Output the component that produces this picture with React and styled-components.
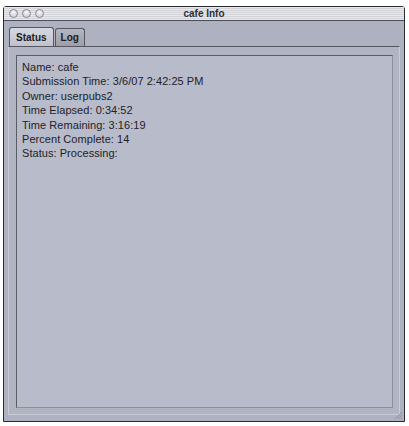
import React from "react";
import styled, { createGlobalStyle } from "styled-components";

const GlobalStyle = createGlobalStyle`
  html, body {
    margin: 0;
    padding: 0;
    background: #ffffff;
  }
  body {
    font-family: "Liberation Sans", Arial, sans-serif;
  }
`;

const Page = styled.div`
  padding: 6px 4px 5px 3px;
`;

const Window = styled.div`
  width: 400px;
  height: 414px;
  border: 1px solid #2a2a30;
  border-radius: 3px 3px 0 0;
  background: #aeb1bf;
  display: flex;
  flex-direction: column;
  position: relative;
`;

const TitleBar = styled.div`
  height: 13px;
  flex-shrink: 0;
  display: flex;
  align-items: center;
  position: relative;
  background: repeating-linear-gradient(
    to bottom,
    #e9e9ec 0px,
    #e9e9ec 1px,
    #d2d3d8 1px,
    #d2d3d8 2px
  );
  border-bottom: 1px solid #4a4b55;
`;

const Lights = styled.div`
  display: flex;
  gap: 4px;
  padding-left: 5px;
`;

const Light = styled.span`
  width: 9px;
  height: 9px;
  border-radius: 50%;
  box-sizing: border-box;
  border: 1px solid #85868f;
  background: radial-gradient(circle at 50% 30%, #f6f6f8, #c8c9d0);
`;

const Title = styled.div`
  position: absolute;
  left: 0;
  right: 0;
  text-align: center;
  font-size: 10px;
  font-weight: bold;
  color: #2e2e34;
`;

const Body = styled.div`
  flex: 1;
  display: flex;
  flex-direction: column;
  padding: 6px 4px 6px 4px;
`;

const TabRow = styled.div`
  display: flex;
  padding-left: 1px;
  height: 19px;
  align-items: flex-end;
`;

const Tab = styled.div`
  height: ${(p) => (p.$active ? "19px" : "18px")};
  box-sizing: border-box;
  padding: 0 ${(p) => (p.$active ? "6px" : "5px")};
  display: flex;
  align-items: center;
  font-size: 10px;
  font-weight: bold;
  color: #1c1c22;
  border: 1px solid #55565f;
  border-bottom: none;
  border-radius: 3px 3px 0 0;
  margin-right: 1px;
  background: ${(p) =>
    p.$active
      ? "linear-gradient(to bottom, #d6d8e1, #bfc2ce)"
      : "linear-gradient(to bottom, #b4b6c0, #9c9ea9)"};
`;

const Panel = styled.div`
  flex: 1;
  border-top: 1px solid #55565f;
  border-left: 1px solid #c9cbd5;
  border-right: 1px solid #c9cbd5;
  border-bottom: 1px solid #c9cbd5;
  background: #b1b4c2;
  padding: 8px 6px 6px 7px;
  display: flex;
`;

const InfoBox = styled.div`
  flex: 1;
  border-top: 1px solid #5b5c66;
  border-left: 1px solid #5b5c66;
  border-right: 1px solid #8d8f9b;
  border-bottom: 1px solid #8d8f9b;
  background: #b8bbc9;
  padding: 4px 5px;
`;

const Line = styled.div`
  font-size: 11px;
  line-height: 14.4px;
  color: #222228;
  letter-spacing: 0.05px;
`;

const Grip = styled.svg`
  position: absolute;
  right: 1px;
  bottom: 1px;
`;

const rows = [
  "Name: cafe",
  "Submission Time: 3/6/07 2:42:25 PM",
  "Owner: userpubs2",
  "Time Elapsed: 0:34:52",
  "Time Remaining: 3:16:19",
  "Percent Complete: 14",
  "Status: Processing:",
];

export default function App() {
  return (
    <>
      <GlobalStyle />
      <Page>
        <Window>
          <TitleBar>
            <Lights>
              <Light />
              <Light />
              <Light />
            </Lights>
            <Title>cafe Info</Title>
          </TitleBar>
          <Body>
            <TabRow>
              <Tab $active>Status</Tab>
              <Tab>Log</Tab>
            </TabRow>
            <Panel>
              <InfoBox>
                {rows.map((r) => (
                  <Line key={r}>{r}</Line>
                ))}
              </InfoBox>
            </Panel>
          </Body>
          <Grip width="10" height="10" viewBox="0 0 10 10">
            <path d="M9 2 L2 9 M9 5 L5 9 M9 8 L8 9" stroke="#8d8f9b" strokeWidth="1" />
          </Grip>
        </Window>
      </Page>
    </>
  );
}
